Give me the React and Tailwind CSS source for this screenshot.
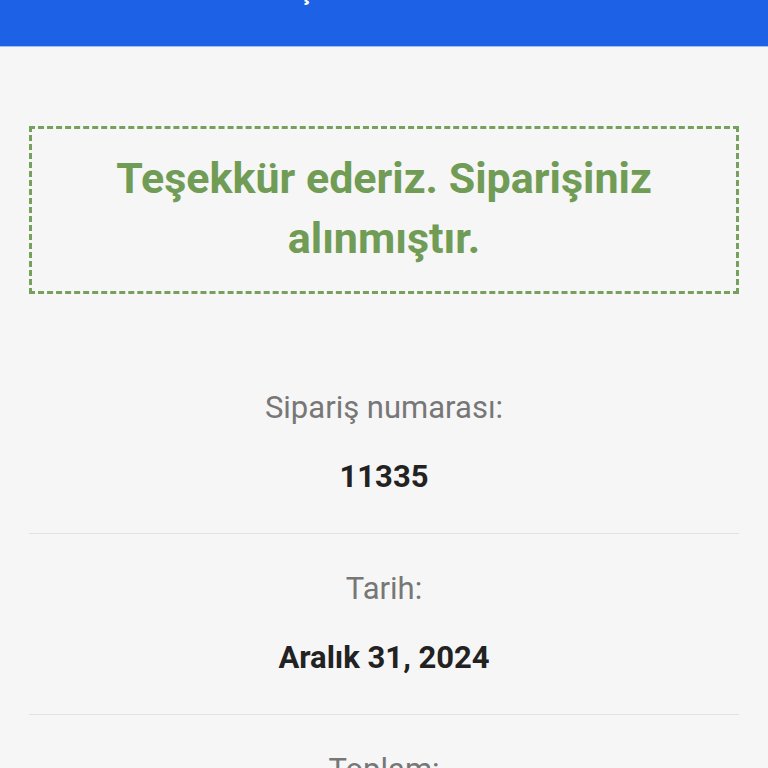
export default function App() {
  const rows = [
    { label: 'Sipariş numarası:', value: '11335' },
    { label: 'Tarih:', value: 'Aralık 31, 2024' },
    { label: 'Toplam:', value: '₺1.250,00' },
    { label: 'Ödeme yöntemi:', value: 'Kapıda ödeme' },
  ];

  return (
    <div className="min-h-screen bg-[#f6f6f6] font-['Roboto',sans-serif]">
      {/* Üst bar (sayfa kaydırılmış) */}
      <header className="h-[47px] bg-[#1d62e6] border-b border-[#9fc0f5] flex flex-col items-center pr-[42px] overflow-hidden">
        <span className="mt-[-22px] text-[26px] leading-[26px] font-semibold text-white">Teşekkür ederiz</span>
      </header>

      <main className="px-[29px] pt-[79px]">
        {/* Onay kutusu */}
        <div className="border-[3px] border-dashed border-[#76a05c] pt-[19px] pb-[23px] px-4 text-center">
          <p className="text-[43px] leading-[60px] font-bold text-[#709c56]">
            Teşekkür ederiz. Siparişiniz alınmıştır.
          </p>
        </div>

        {/* Sipariş detayları */}
        <ul className="mt-[96px]">
          {rows.map((row, i) => (
            <li
              key={row.label}
              className={`flex flex-col items-center gap-[33px] ${i === 0 ? 'pt-0' : 'pt-[37px]'} pb-[38px] border-b border-[#e2e2e2]`}
            >
              <span className="text-[31px] leading-[36px] text-[#777777]">{row.label}</span>
              <span className="text-[31px] leading-[36px] font-bold text-[#222222]">{row.value}</span>
            </li>
          ))}
        </ul>
      </main>
    </div>
  );
}
